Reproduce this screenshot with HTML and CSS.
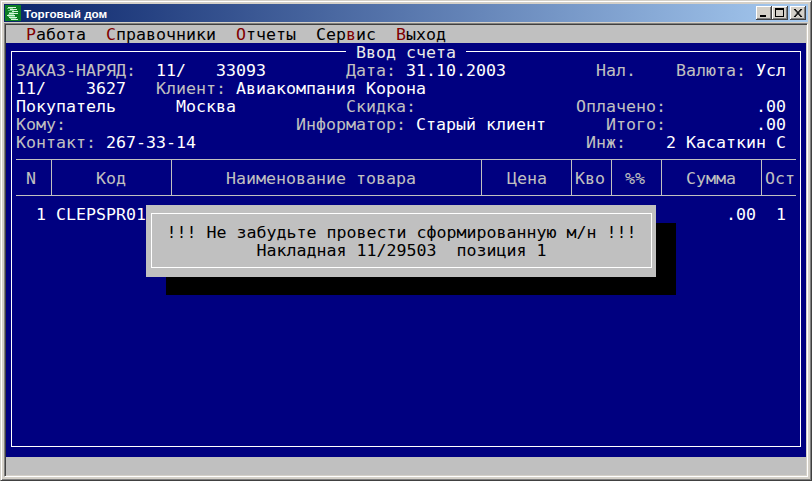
FILE: index.html
```html
<!DOCTYPE html>
<html lang="ru">
<head>
<meta charset="utf-8">
<title>Торговый дом</title>
<link rel="stylesheet" href="styles.css">
</head>
<body>
<div class="window">
  <div class="titlebar">
    <svg class="app-icon" width="16" height="16" viewBox="0 0 16 16"><rect width="16" height="16" fill="#0b7d22"/><path d="M3 2h8v1H3zM5 4h7v1H5zM7 6h6v1H7zM4 8h9v1H4zM2 10h8v1H2zM4 12h8v1H4zM6 14h7v1H6z" fill="#d8f5dc"/><path d="M2 3h6v1H2zM3 5h6v1H3zM4 7h5v1H4zM3 9h6v1H3zM3 11h7v1H3zM5 13h6v1H5z" fill="#63c478"/></svg>
    <span class="title-text">Торговый дом</span>
    <div class="caption-buttons">
      <span class="cap-btn"><svg width="16" height="14" viewBox="0 0 16 14"><rect x="4" y="9" width="6" height="2" fill="#000"/></svg></span>
      <span class="cap-btn"><svg width="16" height="14" viewBox="0 0 16 14"><path d="M3 2h9v9H3zM4 4v6h7V4z" fill="#000" fill-rule="evenodd"/></svg></span>
      <span class="cap-btn cap-close"><svg width="16" height="14" viewBox="0 0 16 14"><path d="M4 3l7 8M5 3l7 8M11 3l-7 8M12 3l-7 8" stroke="#000" stroke-width="1" fill="none"/></svg></span>
    </div>
  </div>
  <div class="client">
    <nav class="menu">
      <span><b>Р</b>абота</span>
      <span><b>С</b>правочники</span>
      <span><b>О</b>тчеты</span>
      <span>Сер<b>в</b>ис</span>
      <span><b>В</b>ыход</span>
    </nav>
    <main class="terminal">
      <section class="frame">
        <div class="frame-title"> Ввод счета </div>
        <div class="info">
          <div class="line"><i>ЗАКАЗ-НАРЯД:</i>  11/   33093        <i>Дата:</i> 31.10.2003         <i>Нал.</i>    <i>Валюта:</i> Усл</div>
          <div class="line">11/    3627   <i>Клиент:</i> Авиакомпания Корона</div>
          <div class="line">Покупатель      Москва           <i>Скидка:</i>                <i>Оплачено:</i>         .00</div>
          <div class="line"><i>Кому:</i>                       <i>Информатор:</i> Старый клиент      <i>Итого:</i>         .00</div>
          <div class="line"><i>Контакт:</i> 267-33-14                                       <i>Инж:</i>    2 Касаткин С</div>
        </div>
        <div class="table-head">
          <div class="th th-n">N</div>
          <div class="th th-code">Код</div>
          <div class="th th-name">Наименование товара</div>
          <div class="th th-price">Цена</div>
          <div class="th th-qty">Кво</div>
          <div class="th th-pct">%%</div>
          <div class="th th-sum">Сумма</div>
          <div class="th th-rest">Ост</div>
        </div>
        <div class="line table-row">  1 CLEPSPR01                                                          .00  1</div>
      </section>
      <div class="dialog">
        <div class="dialog-inner">
          <div class="line">!!! Не забудьте провести сформированную м/н !!!</div>
          <div class="line">Накладная 11/29503  позиция 1</div>
        </div>
      </div>
    </main>
    <div class="status"></div>
  </div>
</div>
</body>
</html>
```
FILE: styles.css
```css
* { box-sizing: border-box; }
html, body { margin: 0; height: 100%; overflow: hidden; }
body { background: #d4d0c8; }

.window {
  height: 100vh;
  display: flex;
  flex-direction: column;
  padding: 3px;
  border: 1px solid;
  border-color: #d4d0c8 #404040 #404040 #d4d0c8;
  box-shadow: inset 1px 1px 0 #fff, inset -1px -1px 0 #808080;
  background: #d4d0c8;
}

.titlebar {
  height: 18px;
  flex: none;
  display: flex;
  align-items: center;
  padding: 0 2px 0 1px;
  background: linear-gradient(90deg, #0a246a, #a6caf0);
  margin-bottom: 1px;
}
.app-icon { flex: none; margin-right: 3px; }
.title-text {
  font: bold 11.7px "Liberation Sans", sans-serif;
  color: #fff;
  white-space: nowrap;
}
.caption-buttons { margin-left: auto; display: flex; }
.cap-btn {
  width: 16px;
  height: 14px;
  display: block;
  background: #d4d0c8;
  box-shadow: inset -1px -1px 0 #404040, inset 1px 1px 0 #fff, inset -2px -2px 0 #808080;
}
.cap-btn svg { display: block; }
.cap-close { margin-left: 2px; }

.client {
  flex: 1;
  min-height: 0;
  display: flex;
  flex-direction: column;
  border: 1px solid #d4d0c8;
  border-top-color: #808080;
  border-left-color: #808080;
  border-right-color: #fff;
  border-bottom-color: #fff;
  padding: 1px;
  box-shadow: inset 1px 1px 0 #404040, inset -1px -1px 0 #d4d0c8;
  font: 16.61px/20px "DejaVu Sans Mono", monospace;
}

.menu {
  flex: none;
  height: 18px;
  display: flex;
  gap: 20px;
  padding-left: 20px;
  background: #c0c0c0;
  color: #000;
  white-space: pre;
}
.menu b { font-weight: normal; color: #800000; }

.terminal {
  flex: 1;
  min-height: 0;
  position: relative;
  background: #000080;
  color: #fff;
  padding: 8px 5px 10px;
}

.frame {
  position: relative;
  height: 100%;
  border: 1px solid #fff;
  padding: 9px 4px 0;
}
.frame-title {
  position: absolute;
  top: -8px;
  left: 334px;
  height: 17px;
  line-height: 18px;
  background: #000080;
  color: #e8e8e8;
  white-space: pre;
}

.line { white-space: pre; height: 18px; }
.line i { font-style: normal; color: #c0c0c0; }

.table-head {
  display: grid;
  grid-template-columns: 36px 120px 310px 90px 40px 50px 100px 35px;
  margin-top: 8px;
  border-top: 1px solid #c0c0c0;
  border-bottom: 1px solid #c0c0c0;
  height: 37px;
  color: #c0c0c0;
}
.th {
  padding-top: 9px;
  border-right: 1px solid #c0c0c0;
  white-space: pre;
}
.th-rest { border-right: 0; }
.th-n { padding-left: 10px; }
.th-code { padding-left: 44px; }
.th-name { padding-left: 54px; }
.th-price { padding-left: 25px; }
.th-qty { padding-left: 3px; }
.th-pct { padding-left: 13px; }
.th-sum { padding-left: 24px; }
.th-rest { padding-left: 3px; }

.table-row { margin-top: 9px; }

.dialog {
  position: absolute;
  left: 140px;
  top: 162px;
  width: 510px;
  height: 72px;
  padding: 8px 4px 9px 5px;
  background: #c0c0c0;
  color: #000;
  box-shadow: 20px 18px 0 #000;
}
.dialog-inner {
  height: 100%;
  border: 1px solid #fff;
  padding-top: 9px;
  display: flex;
  flex-direction: column;
  align-items: center;
}

.status { flex: none; height: 18px; background: #c0c0c0; }
```
